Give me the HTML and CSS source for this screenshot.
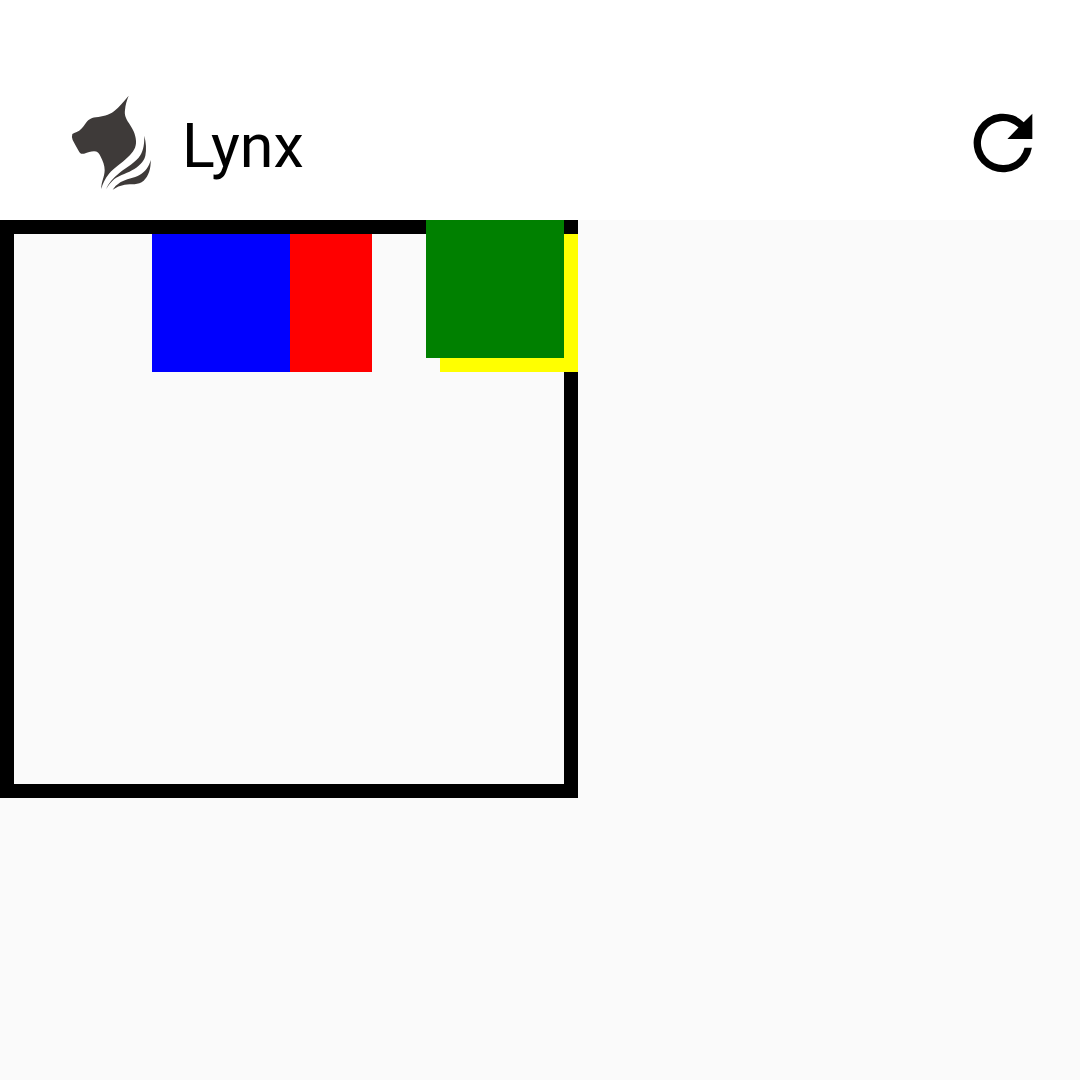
FILE: index.html
```html
<!DOCTYPE html>
<html lang="en">
<head>
<meta charset="utf-8">
<meta name="viewport" content="width=device-width, initial-scale=1">
<title>Lynx</title>
<link rel="stylesheet" href="styles.css">
</head>
<body>
<header class="bar">
  <svg class="logo" viewBox="0 0 300 345" aria-hidden="true">
    <path d="M206 32C190 51 178 66 162 79C146 92 128 94 108 97C90 99 84 106 76 116C68 127 61 137 50 141Q42 144 37 147Q34 156 38 165C43 174 48 184 54 194C59 204 63 208 72 206C84 203 92 199 102 199C112 199 117 205 121 213C129 228 134 241 134 256C134 275 123 292 124 312C127 297 135 281 147 266C162 248 185 235 204 216C220 201 229 188 228 168C227 147 217 130 207 115C197 99 193 90 195 75C196 59 201 45 206 32Z"/>
    <path d="M253 152C253 176 251 194 241 211C227 233 200 247 178 264C158 280 145 295 138 313C143 304 149 296 157 288C173 272 196 268 216 256C236 244 251 232 256 212C260 193 258 173 253 152Z"/>
    <path d="M272 225C267 245 256 260 240 269C222 280 198 281 181 292Q167 301 158 314Q174 302 194 299C214 296 235 301 251 287C266 273 273 250 272 225Z"/>
  </svg>
  <h1 class="title">Lynx</h1>
  <button class="refresh" type="button" aria-label="Refresh">
    <svg class="refresh-icon" viewBox="0 0 24 24" aria-hidden="true">
      <path d="M17.65 6.35A8 8 0 1 0 19.88 13.3H17.85A6 6 0 1 1 16.22 7.78L13.2 10.9H20V4z"/>
    </svg>
  </button>
</header>
<main>
  <div class="frame">
    <div class="square red"></div>
    <div class="square blue"></div>
    <div class="square yellow"></div>
    <div class="square green"></div>
  </div>
</main>
</body>
</html>
```
FILE: styles.css
```css
* {
  box-sizing: border-box;
}

body {
  margin: 0;
  min-height: 100vh;
  background: #fafafa;
  font-family: Roboto, "Liberation Sans", sans-serif;
}

.bar {
  display: flex;
  align-items: center;
  padding: 76px 33px 10px 60px;
  background: #fff;
}

.logo {
  width: 100px;
  height: 115px;
  margin: 9px 22px 10px 0;
  fill: #3e3a39;
}

.title {
  margin: 0;
  padding-top: 6px;
  font-size: 61px;
  font-weight: 400;
  line-height: 72px;
  color: #000;
}

.refresh {
  margin: 0 0 0 auto;
  padding: 0;
  border: 0;
  background: none;
}

.refresh-icon {
  display: block;
  width: 88px;
  height: 88px;
}

.frame {
  position: relative;
  width: 578px;
  aspect-ratio: 1;
  border: 14px solid #000;
}

/* The squares overlap each other and the frame's border. */
.square {
  position: absolute;
  top: 0;
  width: 138px;
  height: 138px;
}

.red {
  left: 220px;
  background: #f00;
}

.blue {
  left: 138px;
  background: #00f;
}

.yellow {
  right: -14px;
  background: #ff0;
}

.green {
  top: -14px;
  right: 0;
  background: #008000;
}
```
